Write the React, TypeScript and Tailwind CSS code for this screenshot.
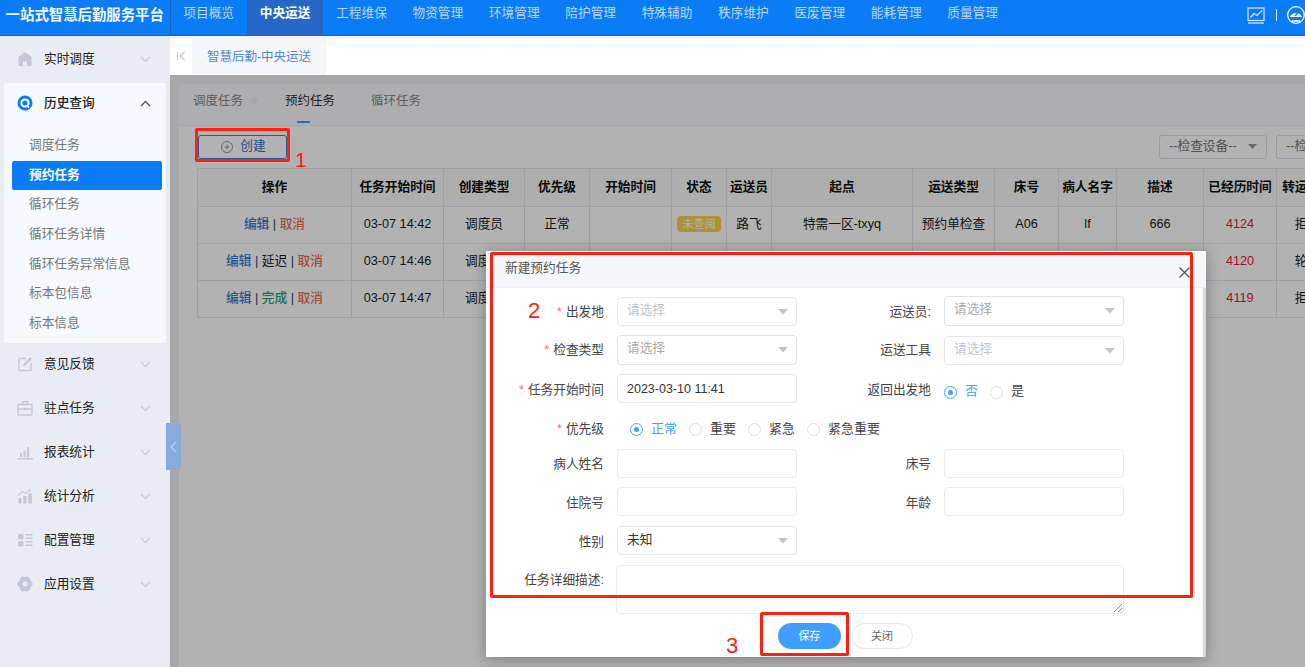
import React from "react";

const navs = ["项目概览", "中央运送", "工程维保", "物资管理", "环境管理", "陪护管理", "特殊辅助", "秩序维护", "医废管理", "能耗管理", "质量管理"];
const subs = ["调度任务", "预约任务", "循环任务", "循环任务详情", "循环任务异常信息", "标本包信息", "标本信息"];

const Chevron = () => (
  <svg width="11" height="7" viewBox="0 0 11 7" fill="none" stroke="#c6cad6" strokeWidth="1.1" className="ml-auto mr-[19px]">
    <path d="M1 1 L5.5 5.5 L10 1" />
  </svg>
);

const c = "#c3c7d6";
const icons: Record<string, React.ReactNode> = {
  home: <path d="M8 1 L1.5 6 V15 H6 V10.5 H10 V15 H14.5 V6 Z M8 1" fill={c} />,
  hist: (
    <g>
      <circle cx="8" cy="8" r="7.5" fill="#0a7cf5" />
      <circle cx="8" cy="8" r="3.6" fill="none" stroke="#fff" strokeWidth="2" />
      <path d="M10 10.5 L12 12.5" stroke="#fff" strokeWidth="1.6" />
    </g>
  ),
  edit: (
    <g fill="none" stroke={c} strokeWidth="1.4">
      <path d="M9 2.5 H2 V14.5 H14 V7" />
      <path d="M6.5 10 L14 2" strokeWidth="2" />
    </g>
  ),
  case: (
    <g fill="none" stroke={c} strokeWidth="1.3">
      <rect x="1" y="4.5" width="14" height="10.5" rx="1" />
      <path d="M5.5 4.5 V1.5 H10.5 V4.5 M1 9 H15" />
      <rect x="6.8" y="8" width="2.4" height="2" fill={c} stroke="none" />
    </g>
  ),
  bars: (
    <g fill={c}>
      <rect x="0" y="14" width="16" height="1.5" />
      <rect x="3" y="9" width="2" height="4" />
      <rect x="6.5" y="7" width="2" height="6" />
      <rect x="10" y="3" width="2" height="10" />
    </g>
  ),
  stat: (
    <g fill={c}>
      <rect x="1.5" y="10" width="3" height="5.5" />
      <rect x="6.3" y="8" width="3" height="7.5" />
      <rect x="11.2" y="5.5" width="3.5" height="10" />
      <path d="M1 7.5 L5.5 3.5 L8.5 5.5 L14 1" fill="none" stroke={c} strokeWidth="1.1" />
    </g>
  ),
  grid: (
    <g fill={c}>
      <rect x="1" y="2" width="5.5" height="5.5" rx="1.5" />
      <rect x="1" y="9" width="5.5" height="5.5" rx="1.5" />
      <rect x="8.5" y="2" width="7" height="1.4" />
      <rect x="8.5" y="5.5" width="7" height="1.4" />
      <rect x="8.5" y="9" width="7" height="1.4" />
      <rect x="8.5" y="12.6" width="7" height="1.4" />
    </g>
  ),
  gear: (
    <g>
      <path d="M5 1.5 H11 L15 8 L11 14.5 H5 L1 8 Z" fill={c} stroke={c} strokeWidth="1.5" strokeLinejoin="round" />
      <circle cx="8" cy="8" r="2.4" fill="#e9ecf4" />
    </g>
  ),
};

const Icon = ({ name }: { name: string }) => (
  <svg width="16" height="16" viewBox="0 0 16 16" className="ml-[17px] mr-[11px] shrink-0">
    {icons[name]}
  </svg>
);

const MenuRow = ({ icon, label, first }: { icon: string; label: string; first?: boolean }) => (
  <div className={"flex h-10 items-center text-[12.7px] text-[#222] " + (first ? "mt-[1px]" : "mt-1")}>
    <Icon name={icon} />
    <span>{label}</span>
    <Chevron />
  </div>
);

type Cell = React.ReactNode;
const heads = ["操作", "任务开始时间", "创建类型", "优先级", "开始时间", "状态", "运送员", "起点", "运送类型", "床号", "病人名字", "描述", "已经历时间", "转运工具"];
const widths = ["w-[154px]", "w-[92px]", "w-[81px]", "w-[65px]", "w-[82px]", "w-[55px]", "w-[45px]", "w-[141px]", "w-[82px]", "w-[64px]", "w-[58px]", "w-[87px]", "w-[73px]", "w-[62px]"];

const Edit = () => <span className="font-medium text-[#3a7ed0]">编辑</span>;
const Cancel = () => <span className="font-medium text-[#ea6f55]">取消</span>;
const Sep = () => <span className="text-[#27456e]"> | </span>;

const rows: Cell[][] = [
  [
    <><Edit /><Sep /><Cancel /></>,
    "03-07 14:42", "调度员", "正常", "",
    <span className="inline-block h-4 w-[44px] rounded-sm bg-[#f8d253] text-[11px] leading-4 text-white">未查阅</span>,
    "路飞", "特需一区-txyq", "预约单检查", "A06", "lf", "666",
    <span className="text-[#f0143c]">4124</span>, "拒绝",
  ],
  [
    <><Edit /><Sep /><span>延迟</span><Sep /><Cancel /></>,
    "03-07 14:46", "调度员", "正常", "", "", "路飞", "", "", "", "", "",
    <span className="text-[#f0143c]">4120</span>, "轮椅",
  ],
  [
    <><Edit /><Sep /><span className="font-medium text-[#24a37c]">完成</span><Sep /><Cancel /></>,
    "03-07 14:47", "调度员", "正常", "", "", "路飞", "", "", "", "", "",
    <span className="text-[#f0143c]">4119</span>, "拒绝",
  ],
];

const Arrow = () => (
  <svg width="10" height="6" viewBox="0 0 10 6" className="ml-auto">
    <path d="M0 0 H10 L5 5.5 Z" fill="#c0c4cc" />
  </svg>
);

const Select = ({ text, dark, extra }: { text: string; dark?: boolean; extra?: string }) => (
  <div className={"flex h-[29px] w-[180px] shrink-0 items-center rounded-sm border border-[#e6e8ec] bg-white pl-[9px] pr-[8px] text-[12.7px] " + (dark ? "text-[#333] " : "text-[#c0c4cc] ") + (extra || "")}>
    <span className={dark ? "" : "pb-[2px]"}>{text}</span>
    <Arrow />
  </div>
);

const Box = () => <div className="h-[29px] w-[180px] rounded-sm border border-[#e9ebef] bg-white" />;

const Label = ({ text, req, w, low }: { text: string; req?: boolean; w: string; low?: boolean }) => (
  <div className={w + " h-[29px] shrink-0 pr-[13px] text-right text-[12.7px] text-[#444] " + (low ? "leading-[32px]" : "leading-[30px]")}>
    {req && <span className="mr-[4px] text-[#f56c6c]">*</span>}
    {text}
  </div>
);

const Radio = ({ on, text }: { on?: boolean; text: string }) => (
  <div className="mr-[12px] flex items-center">
    <span className={"mr-[8px] flex h-[13px] w-[13px] items-center justify-center rounded-full border bg-white " + (on ? "border-[#409eff]" : "border-[#dcdfe6]")}>
      {on && <span className="h-[5px] w-[5px] rounded-full bg-[#409eff]" />}
    </span>
    <span className={"pb-[2px] text-[13px] " + (on ? "text-[#409eff]" : "text-[#444]")}>{text}</span>
  </div>
);

const L = "w-[131px]";
const R = "w-[147px]";
const row = "flex h-[29px] items-start";

export default function App() {
  return (
    <div className="relative h-[667px] w-[1305px] overflow-hidden bg-white font-['Liberation_Sans','Noto_Sans_CJK_SC',sans-serif]">
      {/* top bar */}
      <header className="flex h-[36px] border-b border-[#2d5f9e] bg-[#0a7cf5]">
        <div className="flex w-[170.5px] shrink-0 items-start justify-center border-r border-[#1a62bd] pt-[6px] text-[14.4px] font-bold leading-[19px] whitespace-nowrap text-[#f2f7ff]">
          一站式智慧后勤服务平台
        </div>
        <nav className="flex">
          {navs.map((n, i) => (
            <div
              key={n}
              className={
                "w-[76.4px] pt-[4px] text-center text-[12.7px] leading-[18px] " +
                (i === 1 ? "bg-[#2566c6] font-bold text-white" : "text-[#b9d8fb]")
              }
            >
              {n}
            </div>
          ))}
        </nav>
        <div className="ml-auto flex items-start pt-[7px]">
          <svg width="18" height="17" viewBox="0 0 18 17" fill="none" stroke="#d6e8ff" strokeWidth="1.2">
            <rect x="1" y="1" width="16" height="12.5" />
            <path d="M3.5 10.5 L7 6.5 L10 8.5 L15 3.5" />
            <path d="M1 16 H17" />
          </svg>
          <span className="ml-[11px] mt-[2px] h-[12px] w-px bg-[#d6e8ff]" />
          <svg width="18" height="18" viewBox="0 0 18 18" className="ml-[10px] -mt-px shrink-0">
            <circle cx="9" cy="9" r="8.3" fill="#0a7cf5" stroke="#fff" strokeWidth="1.3" />
            <path d="M3 11 A6.5 6.5 0 0 1 15 11 Z" fill="#fff" />
            <path d="M8 10 L12 5.5" stroke="#0a7cf5" strokeWidth="1.4" />
            <path d="M5 15 H13" stroke="#fff" strokeWidth="1.5" />
          </svg>
        </div>
      </header>

      <div className="flex h-[631px]">
        {/* sidebar */}
        <aside className="flex w-[170px] shrink-0 flex-col bg-[#e9ecf4] pt-[3px]">
          <div className="flex h-10 items-center text-[12.7px] text-[#222]">
            <Icon name="home" />
            <span className="pt-[1px]">实时调度</span>
            <Chevron />
          </div>
          <div className="mx-[4px] mt-1 rounded-[3px] bg-[#f6f9fd] pb-[5px]">
            <div className="flex h-10 items-center text-[12.7px] font-medium text-[#222]">
              <svg width="16" height="16" viewBox="0 0 16 16" className="ml-[13px] mr-[11px] shrink-0">{icons.hist}</svg>
              <span className="pt-[1px]">历史查询</span>
              <svg width="11" height="7" viewBox="0 0 11 7" fill="none" stroke="#444" strokeWidth="1.1" className="ml-auto mr-[15px]">
                <path d="M1 6 L5.5 1.5 L10 6" />
              </svg>
            </div>
            <div className="mt-[8px]">
              {subs.map((s, i) => (
                <div
                  key={s}
                  className={
                    "ml-[8px] mr-[4px] h-[29.65px] rounded-[2px] pb-[3px] pl-[17px] text-[12.7px] leading-[28px] " +
                    (i === 1 ? "bg-[#0a7cf5] font-bold text-white" : "text-[#777]")
                  }
                >
                  {s}
                </div>
              ))}
            </div>
          </div>
          <MenuRow first icon="edit" label="意见反馈" />
          <MenuRow icon="case" label="驻点任务" />
          <MenuRow icon="bars" label="报表统计" />
          <MenuRow icon="stat" label="统计分析" />
          <MenuRow icon="grid" label="配置管理" />
          <MenuRow icon="gear" label="应用设置" />
        </aside>

        {/* main */}
        <main className="flex min-w-0 flex-1 flex-col">
          <div className="h-[3px] bg-[#f2f3f5]" />
          <div className="flex h-[36px] bg-white">
            <div className="flex w-[22px] items-center justify-center pb-[2px]">
              <svg width="10" height="10" viewBox="0 0 10 10" fill="none" stroke="#c3c6cc" strokeWidth="1.2">
                <path d="M1.5 1 V9 M8.5 1 L4 5 L8.5 9" />
              </svg>
            </div>
            <div className="w-[134px] bg-[#f6f7f9] pt-[9px] text-center text-[12.5px] leading-[18px] text-[#4f86d0]">智慧后勤-中央运送</div>
          </div>

          <div className="relative min-h-0 flex-1 overflow-hidden bg-[#f0f1f4] pl-[9px]">
            <div className="h-full bg-white pt-0">
              <div className="mt-[9px] flex h-[42px] border-b border-[#eceef2] bg-[#f9fafc] pl-[14px] text-[12.5px] text-[#888]">
                <span className="relative pt-[8px] leading-[18px]">
                  调度任务
                  <span className="absolute -right-[15px] top-[13px] h-[7px] w-[7px] rounded-full bg-[#eef0f3]" />
                </span>
                <span className="relative ml-[42px] pt-[8px] leading-[18px] text-[#333]">
                  预约任务
                  <span className="absolute bottom-[2px] left-[12px] h-[2px] w-[13px] bg-[#409eff]" />
                </span>
                <span className="ml-[36px] pt-[8px] leading-[18px]">循环任务</span>
              </div>
              <div className="flex h-[42px] items-start pl-[19px] pt-[9px]">
                <div className="flex h-[24px] w-[89px] items-center justify-center rounded-[3px] border border-[#3e82de] pl-[2px] text-[12.7px] text-[#3f6fc8]">
                  <svg width="12" height="12" viewBox="0 0 12 12" fill="none" stroke="#7d8fa8" strokeWidth="0.9" className="mr-[7px]">
                    <circle cx="6" cy="6" r="5.5" />
                    <path d="M3.5 6 H8.5 M6 3.5 V8.5" />
                  </svg>
                  创建
                </div>
                <div className="ml-auto flex h-[24px] w-[108px] items-center rounded-[3px] border border-[#dcdfe6] pl-[9px] pr-[9px] text-[12.7px] text-[#777]">
                  --检查设备--
                  <svg width="9" height="6" viewBox="0 0 9 6" className="ml-auto"><path d="M0 0 H9 L4.5 5 Z" fill="#999" /></svg>
                </div>
                <div className="ml-[9px] mr-[-62px] flex h-[24px] w-[91px] shrink-0 items-center rounded-l-[3px] border border-[#dcdfe6] pl-[9px] text-[12.7px] whitespace-nowrap text-[#777]">
                  --检查类型--
                </div>
              </div>
              <div className="pl-[18px]">
                <table className="w-[1142px] table-fixed border-collapse text-center text-[12.7px] text-[#222]">
                  <thead>
                    <tr className="h-[38px]">
                      {heads.map((h, i) => (
                        <th key={h} className={widths[i] + " border border-[#e3e5ea] bg-[#f9fafb] font-bold whitespace-nowrap text-[#111]"}>{h}</th>
                      ))}
                    </tr>
                  </thead>
                  <tbody>
                    {rows.map((r, i) => (
                      <tr key={i} className="h-[37px]">
                        {r.map((cell, j) => (
                          <td key={j} className="border border-[#e3e5ea] p-0 whitespace-nowrap">{cell}</td>
                        ))}
                      </tr>
                    ))}
                  </tbody>
                </table>
              </div>
            </div>
            <div className="absolute inset-0 bg-black/30" />
          </div>
        </main>
      </div>

      {/* collapse handle */}
      <div className="absolute left-[166px] top-[423px] flex h-[47px] w-[15px] items-center justify-center rounded-r-[3px] bg-[#86acdc]">
        <svg width="7" height="12" viewBox="0 0 7 12" fill="none" stroke="#bcd2ee" strokeWidth="1.2"><path d="M6 1 L1 6 L6 11" /></svg>
      </div>

      {/* dialog */}
      <div className="absolute left-[486px] top-[251px] flex h-[406px] w-[720px] flex-col bg-white shadow-[0_2px_14px_rgba(0,0,0,0.3)]">
        <div className="relative h-[37px] shrink-0 border-b border-[#eef1f5] bg-[#f4f8fb] pl-[19px] text-[12.7px] leading-[34px] text-[#555]">
          新建预约任务
          <svg width="11" height="11" viewBox="0 0 11 11" stroke="#555" strokeWidth="1.3" className="absolute right-[16px] top-[16px]"><path d="M0.5 0.5 L10.5 10.5 M10.5 0.5 L0.5 10.5" /></svg>
        </div>
        <div className="relative flex-1 border-r-[3px] border-[#d8d8d8] pt-[9px]">
          <div className={row}>
            <Label text="出发地" req w={L} />
            <Select text="请选择" />
            <Label text="运送员:" w={R} />
            <Select text="请选择" extra="-mt-px h-[30px] !text-[#aaa] !border-[#dfe1e6]" />
          </div>
          <div className={row + " mt-[9px]"}>
            <Label text="检查类型" req w={L} />
            <Select text="请选择" extra="h-[30px] !text-[#aaa] !border-[#dfe1e6]" />
            <Label text="运送工具" w={R} />
            <Select text="请选择" extra="mt-px" />
          </div>
          <div className={row + " mt-[10px]"}>
            <Label text="任务开始时间" req w={L} low />
            <div className="h-[29px] w-[180px] rounded-sm border border-[#e6e8ec] pl-[9px] text-[12.5px] leading-[28px] text-[#333]">2023-03-10 11:41</div>
            <div className={R + " shrink-0 pr-[13px] pt-[1px] text-right text-[12.7px] leading-[31px] text-[#444]"}>返回出发地</div>
            <div className="flex h-[36px] items-center">
              <Radio on text="否" />
              <Radio text="是" />
            </div>
          </div>
          <div className="mt-[11px] flex h-[31px] items-center">
            <div className={L + " shrink-0 pr-[13px] text-right text-[12.7px] text-[#444]"}>
              <span className="mr-[4px] text-[#f56c6c]">*</span>优先级
            </div>
            <div className="flex pl-[13px]">
              <Radio on text="正常" />
              <Radio text="重要" />
              <Radio text="紧急" />
              <Radio text="紧急重要" />
            </div>
          </div>
          <div className={row + " mt-[4px]"}>
            <Label text="病人姓名" w={L} />
            <Box />
            <Label text="床号" w={R} />
            <Box />
          </div>
          <div className={row + " mt-[9px]"}>
            <Label text="住院号" w={L} low />
            <Box />
            <Label text="年龄" w={R} low />
            <Box />
          </div>
          <div className={row + " mt-[10px]"}>
            <Label text="性别" w={L} low />
            <Select text="未知" dark />
          </div>
          <div className="mt-[10px] flex items-start">
            <div className="w-[131px] shrink-0 pr-[13px] text-right text-[12.7px] leading-[30px] whitespace-nowrap text-[#444]">任务详细描述:</div>
            <div className="relative -ml-px h-[49px] w-[508px] rounded-sm border border-[#e9ebef]">
              <svg width="9" height="9" viewBox="0 0 9 9" stroke="#777" strokeWidth="0.9" className="absolute bottom-[1px] right-[1px]"><path d="M1 9 L9 1 M5 9 L9 5" /></svg>
            </div>
          </div>
          <div className="mt-[9px] flex pl-[292px]">
            <div className="h-[26px] w-[63px] rounded-full bg-[#409eff] text-center text-[11px] leading-[26px] text-white">保存</div>
            <div className="ml-[10px] h-[26px] w-[62px] rounded-full border border-[#e4e7ed] text-center text-[11px] leading-[24px] text-[#666]">关闭</div>
          </div>
        </div>
      </div>

      {/* annotations */}
      <div className="absolute left-[195px] top-[128px] h-[34px] w-[95px] rounded-[2px] border-[3px] border-[#ff2010]" />
      <div className="absolute left-[490px] top-[252px] h-[346px] w-[703px] rounded-[2px] border-[3px] border-[#ff2010]" />
      <div className="absolute left-[760px] top-[612px] h-[44px] w-[89px] rounded-[2px] border-[3px] border-[#ff2010]" />
      <span className="absolute left-[295px] top-[148px] text-[21px] leading-[24px] text-[#ff2010]">1</span>
      <span className="absolute left-[528px] top-[298px] text-[22px] leading-[25px] text-[#ff2010]">2</span>
      <span className="absolute left-[726px] top-[633px] text-[22px] leading-[25px] text-[#ff2010]">3</span>
    </div>
  );
}
